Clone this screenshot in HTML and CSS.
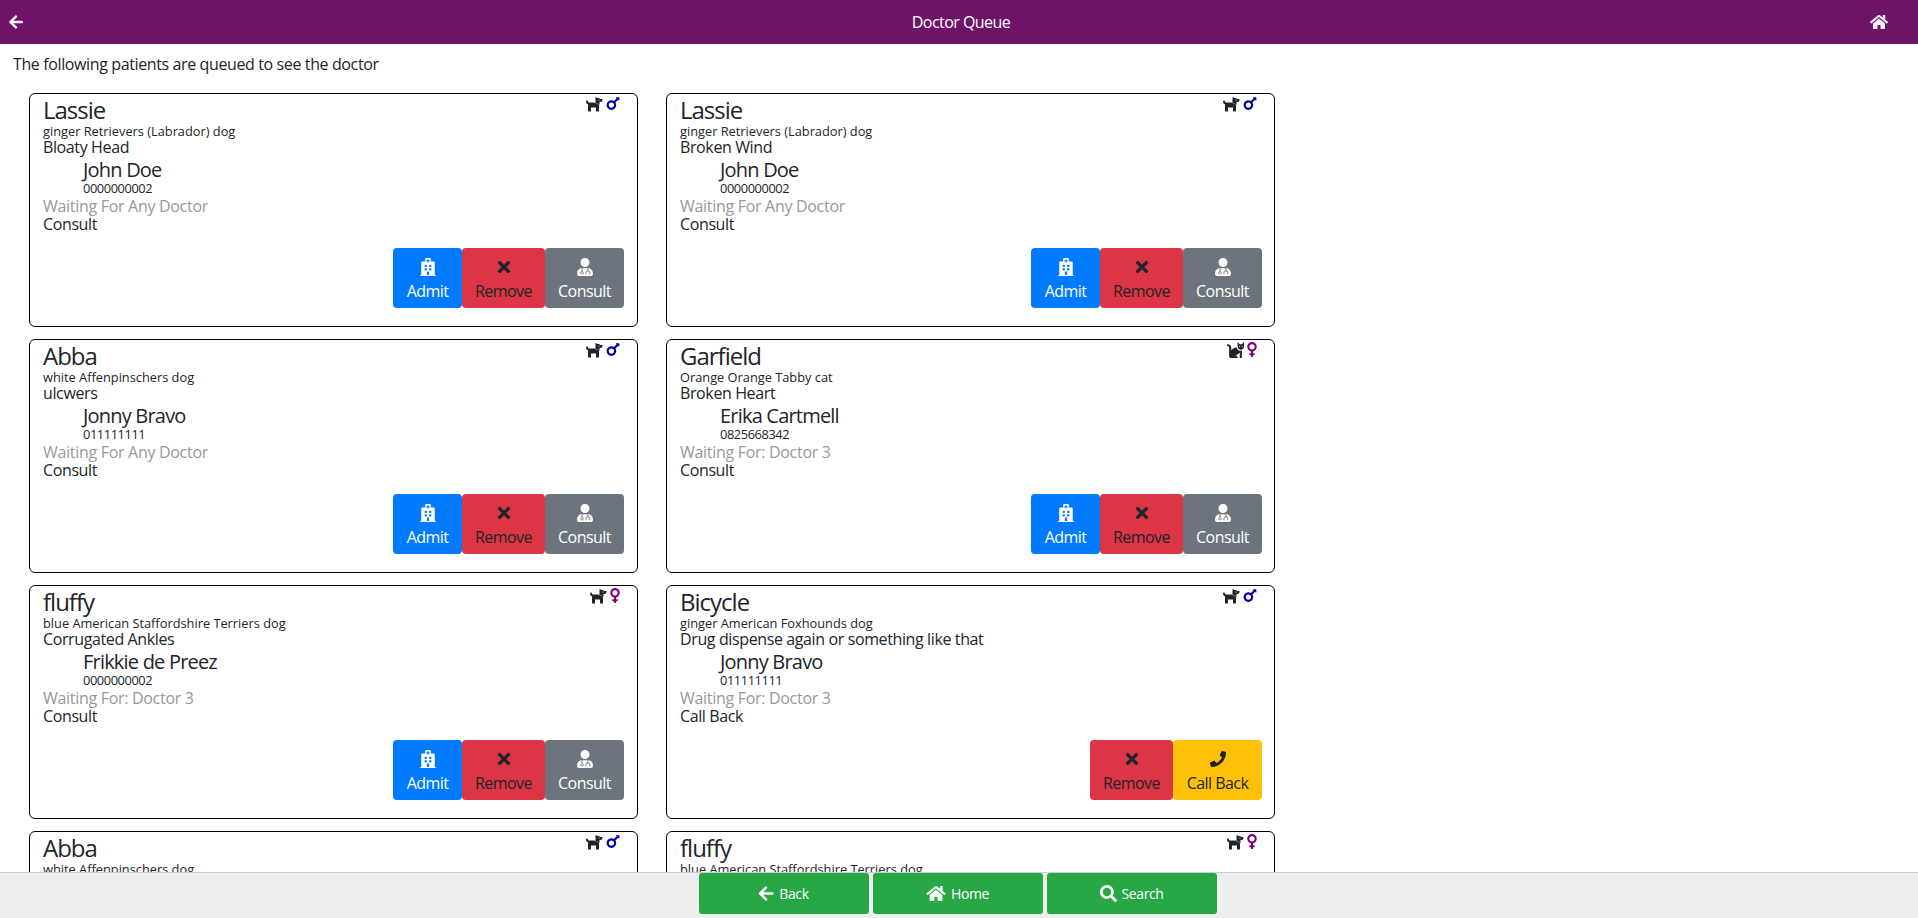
FILE: index.html
```html
<!DOCTYPE html>
<html lang="en">
<head>
<meta charset="utf-8">
<title>Doctor Queue</title>
<link rel="stylesheet" href="styles.css">
</head>
<body>
<svg class="sprite" xmlns="http://www.w3.org/2000/svg">
<symbol id="i-back" viewBox="0 0 448 512"><path d="M257.5 445.1l-22.2 22.2c-9.4 9.4-24.6 9.4-33.9 0L7 273c-9.4-9.4-9.4-24.6 0-33.9L201.4 44.7c9.4-9.4 24.6-9.4 33.9 0l22.2 22.2c9.5 9.5 9.3 25-.4 34.3L136.6 216H424c13.3 0 24 10.7 24 24v32c0 13.3-10.7 24-24 24H136.6l120.5 114.8c9.8 9.3 10 24.8.4 34.3z"/></symbol>
<symbol id="i-home" viewBox="0 0 576 512"><path d="M280.37 148.26L96 300.11V464a16 16 0 0 0 16 16l112.06-.29a16 16 0 0 0 15.92-16V368a16 16 0 0 1 16-16h64a16 16 0 0 1 16 16v95.64a16 16 0 0 0 16 16.05L464 480a16 16 0 0 0 16-16V300L295.67 148.26a12.19 12.19 0 0 0-15.3 0zM571.6 251.47L488 182.56V44.05a12 12 0 0 0-12-12h-56a12 12 0 0 0-12 12v72.61L318.47 43a48 48 0 0 0-61 0L4.34 251.47a12 12 0 0 0-1.6 16.9l25.5 31A12 12 0 0 0 45.15 301l235.22-193.74a12.19 12.19 0 0 1 15.3 0L530.9 301a12 12 0 0 0 16.9-1.6l25.5-31a12 12 0 0 0-1.7-16.93z"/></symbol>
<symbol id="i-search" viewBox="0 0 512 512"><path d="M505 442.7L405.3 343c-4.5-4.5-10.6-7-17-7H372c27.6-35.3 44-79.7 44-128C416 93.1 322.9 0 208 0S0 93.1 0 208s93.1 208 208 208c48.3 0 92.7-16.4 128-44v16.3c0 6.4 2.5 12.5 7 17l99.7 99.7c9.4 9.4 24.6 9.4 33.9 0l28.3-28.3c9.4-9.4 9.4-24.6.1-34zM208 336c-70.7 0-128-57.2-128-128 0-70.7 57.2-128 128-128 70.7 0 128 57.2 128 128 0 70.7-57.2 128-128 128z"/></symbol>
<symbol id="i-times" viewBox="0 0 352 512"><path d="M242.72 256l100.07-100.07c12.28-12.28 12.28-32.19 0-44.48l-22.24-22.24c-12.28-12.28-32.19-12.28-44.48 0L176 189.28 75.93 89.21c-12.28-12.28-32.19-12.28-44.48 0L9.21 111.45c-12.28 12.28-12.28 32.19 0 44.48L109.28 256 9.21 356.07c-12.28 12.28-12.28 32.19 0 44.48l22.24 22.24c12.28 12.28 32.2 12.28 44.48 0L176 322.72l100.07 100.07c12.28 12.28 32.2 12.28 44.48 0l22.24-22.24c12.28-12.28 12.28-32.19 0-44.48L242.72 256z"/></symbol>
<symbol id="i-phone" viewBox="0 0 512 512"><path d="M493.4 24.6l-104-24c-11.3-2.6-22.9 3.3-27.5 13.9l-48 112c-4.2 9.8-1.4 21.3 6.9 28l60.6 49.6c-36 76.7-98.9 140.5-177.2 177.2l-49.6-60.6c-6.8-8.3-18.2-11.1-28-6.9l-112 48C3.9 366.5-2 378.1.6 389.4l24 104C27.1 504.2 36.7 512 48 512c256.1 0 464-207.5 464-464 0-11.2-7.7-20.9-18.6-23.4z"/></symbol>
<symbol id="i-mars" viewBox="0 0 384 512"><path d="M372 64h-79c-10.7 0-16 12.9-8.5 20.5l16.9 16.9-80.7 80.7c-22.2-14-48.5-22.1-76.7-22.1C64.5 160 0 224.5 0 304s64.5 144 144 144 144-64.5 144-144c0-28.2-8.1-54.5-22.1-76.7l80.7-80.7 16.9 16.9c7.6 7.6 20.5 2.2 20.5-8.5V84c0-11-9-20-20-20zM144 384c-44.1 0-80-35.9-80-80s35.9-80 80-80 80 35.9 80 80-35.9 80-80 80z"/></symbol>
<symbol id="i-venus" viewBox="0 0 288 512"><path d="M288 176c0-79.5-64.5-144-144-144S0 96.5 0 176c0 68.5 47.9 125.9 112 140.4V368H76c-6.6 0-12 5.4-12 12v40c0 6.6 5.4 12 12 12h36v36c0 6.6 5.4 12 12 12h40c6.6 0 12-5.4 12-12v-36h36c6.6 0 12-5.4 12-12v-40c0-6.6-5.4-12-12-12h-36v-51.6c64.1-14.5 112-71.9 112-140.4zm-224 0c0-44.1 35.9-80 80-80s80 35.9 80 80-35.9 80-80 80-80-35.9-80-80z"/></symbol>
<symbol id="i-dog" viewBox="0 0 576 512"><path d="M298.06,224,448,277.55V496a16,16,0,0,1-16,16H368a16,16,0,0,1-16-16V384H192V496a16,16,0,0,1-16,16H112a16,16,0,0,1-16-16V282.09C58.84,268.84,32,233.66,32,192a32,32,0,0,1,64,0,32.06,32.06,0,0,0,32,32ZM544,112H480l-7.16-14.31A32,32,0,0,0,444.22,80H390.13L363.31,53.2C353.23,43.12,336,50.26,336,64.51V249.14l128,45.71V208h32a64,64,0,0,0,64-64V128A16,16,0,0,0,544,112ZM448,160a16,16,0,1,1,16-16A16,16,0,0,1,448,160Z"/></symbol>
<symbol id="i-cat" viewBox="0 0 512 512"><path d="M290.59 192c-20.18 0-106.82 1.98-162.59 85.95V192c0-52.94-43.06-96-96-96-17.67 0-32 14.33-32 32s14.33 32 32 32c17.64 0 32 14.36 32 32v256c0 35.3 28.7 64 64 64h176c8.84 0 16-7.16 16-16v-16c0-17.67-14.33-32-32-32h-32l128-96v144c0 8.84 7.16 16 16 16h32c8.84 0 16-7.16 16-16V289.86c-10.29 2.67-20.89 4.54-32 4.54-61.81 0-113.52-44.05-125.41-102.4zM448 96h-64l-64-64v134.4c0 53.02 42.98 96 96 96s96-42.98 96-96V32l-64 64zm-72 80c-8.84 0-16-7.16-16-16s7.16-16 16-16 16 7.16 16 16-7.16 16-16 16zm80 0c-8.84 0-16-7.16-16-16s7.16-16 16-16 16 7.16 16 16-7.16 16-16 16z"/></symbol>
<symbol id="i-hospital" viewBox="0 0 448 512"><path d="M448 492v20H0v-20c0-6.627 5.373-12 12-12h20V120c0-13.255 10.745-24 24-24h88V24c0-13.255 10.745-24 24-24h112c13.255 0 24 10.745 24 24v72h88c13.255 0 24 10.745 24 24v360h20c6.627 0 12 5.373 12 12zM308 192h-40c-6.627 0-12 5.373-12 12v40c0 6.627 5.373 12 12 12h40c6.627 0 12-5.373 12-12v-40c0-6.627-5.373-12-12-12zm-168 64h40c6.627 0 12-5.373 12-12v-40c0-6.627-5.373-12-12-12h-40c-6.627 0-12 5.373-12 12v40c0 6.627 5.373 12 12 12zm104 128h-40c-6.627 0-12 5.373-12 12v84h64v-84c0-6.627-5.373-12-12-12zm64-96h-40c-6.627 0-12 5.373-12 12v40c0 6.627 5.373 12 12 12h40c6.627 0 12-5.373 12-12v-40c0-6.627-5.373-12-12-12zm-116 12c0-6.627-5.373-12-12-12h-40c-6.627 0-12 5.373-12 12v40c0 6.627 5.373 12 12 12h40c6.627 0 12-5.373 12-12v-40zM182 96h26v26a6 6 0 0 0 6 6h20a6 6 0 0 0 6-6V96h26a6 6 0 0 0 6-6V70a6 6 0 0 0-6-6h-26V38a6 6 0 0 0-6-6h-20a6 6 0 0 0-6 6v26h-26a6 6 0 0 0-6 6v20a6 6 0 0 0 6 6z"/></symbol>
<symbol id="i-doctor" viewBox="0 0 448 512"><path d="M224 256c70.7 0 128-57.3 128-128S294.7 0 224 0 96 57.3 96 128s57.3 128 128 128zM134 288C60 288 0 348 0 422v42c0 26.5 21.5 48 48 48h352c26.5 0 48-21.5 48-48v-42c0-74-60-134-134-134z"/><path fill="none" stroke="#6c757d" stroke-width="28" d="M140 290v95M140 385a35 35 0 1 0 .1 0zM305 290v70M250 465v-45a55 55 0 0 1 110 0v45"/></symbol>
</svg>

<header class="topbar">
  <svg class="top-icon top-back"><use href="#i-back"/></svg>
  <span class="top-title">Doctor Queue</span>
  <svg class="top-icon top-home"><use href="#i-home"/></svg>
</header>

<main class="page">
  <p class="intro">The following patients are queued to see the doctor</p>
  <div class="queue">

    <article class="card">
      <div class="tags"><svg class="tag tag-dog"><use href="#i-dog"/></svg><svg class="tag tag-mars"><use href="#i-mars"/></svg></div>
      <div class="name">Lassie</div>
      <div class="small">ginger Retrievers (Labrador) dog</div>
      <div class="line">Bloaty Head</div>
      <div class="owner">John Doe</div>
      <div class="phone">0000000002</div>
      <div class="line muted">Waiting For Any Doctor</div>
      <div class="line">Consult</div>
      <div class="actions">
        <button class="btn btn-admit"><svg class="bi"><use href="#i-hospital"/></svg><span>Admit</span></button>
        <button class="btn btn-remove"><svg class="bi"><use href="#i-times"/></svg><span>Remove</span></button>
        <button class="btn btn-consult"><svg class="bi"><use href="#i-doctor"/></svg><span>Consult</span></button>
      </div>
    </article>

    <article class="card">
      <div class="tags"><svg class="tag tag-dog"><use href="#i-dog"/></svg><svg class="tag tag-mars"><use href="#i-mars"/></svg></div>
      <div class="name">Lassie</div>
      <div class="small">ginger Retrievers (Labrador) dog</div>
      <div class="line">Broken Wind</div>
      <div class="owner">John Doe</div>
      <div class="phone">0000000002</div>
      <div class="line muted">Waiting For Any Doctor</div>
      <div class="line">Consult</div>
      <div class="actions">
        <button class="btn btn-admit"><svg class="bi"><use href="#i-hospital"/></svg><span>Admit</span></button>
        <button class="btn btn-remove"><svg class="bi"><use href="#i-times"/></svg><span>Remove</span></button>
        <button class="btn btn-consult"><svg class="bi"><use href="#i-doctor"/></svg><span>Consult</span></button>
      </div>
    </article>

    <article class="card">
      <div class="tags"><svg class="tag tag-dog"><use href="#i-dog"/></svg><svg class="tag tag-mars"><use href="#i-mars"/></svg></div>
      <div class="name">Abba</div>
      <div class="small">white Affenpinschers dog</div>
      <div class="line">ulcwers</div>
      <div class="owner">Jonny Bravo</div>
      <div class="phone">011111111</div>
      <div class="line muted">Waiting For Any Doctor</div>
      <div class="line">Consult</div>
      <div class="actions">
        <button class="btn btn-admit"><svg class="bi"><use href="#i-hospital"/></svg><span>Admit</span></button>
        <button class="btn btn-remove"><svg class="bi"><use href="#i-times"/></svg><span>Remove</span></button>
        <button class="btn btn-consult"><svg class="bi"><use href="#i-doctor"/></svg><span>Consult</span></button>
      </div>
    </article>

    <article class="card">
      <div class="tags"><svg class="tag tag-cat"><use href="#i-cat"/></svg><svg class="tag tag-venus"><use href="#i-venus"/></svg></div>
      <div class="name">Garfield</div>
      <div class="small">Orange Orange Tabby cat</div>
      <div class="line">Broken Heart</div>
      <div class="owner">Erika Cartmell</div>
      <div class="phone">0825668342</div>
      <div class="line muted">Waiting For: Doctor 3</div>
      <div class="line">Consult</div>
      <div class="actions">
        <button class="btn btn-admit"><svg class="bi"><use href="#i-hospital"/></svg><span>Admit</span></button>
        <button class="btn btn-remove"><svg class="bi"><use href="#i-times"/></svg><span>Remove</span></button>
        <button class="btn btn-consult"><svg class="bi"><use href="#i-doctor"/></svg><span>Consult</span></button>
      </div>
    </article>

    <article class="card">
      <div class="tags"><svg class="tag tag-dog"><use href="#i-dog"/></svg><svg class="tag tag-venus"><use href="#i-venus"/></svg></div>
      <div class="name">fluffy</div>
      <div class="small">blue American Staffordshire Terriers dog</div>
      <div class="line">Corrugated Ankles</div>
      <div class="owner">Frikkie de Preez</div>
      <div class="phone">0000000002</div>
      <div class="line muted">Waiting For: Doctor 3</div>
      <div class="line">Consult</div>
      <div class="actions">
        <button class="btn btn-admit"><svg class="bi"><use href="#i-hospital"/></svg><span>Admit</span></button>
        <button class="btn btn-remove"><svg class="bi"><use href="#i-times"/></svg><span>Remove</span></button>
        <button class="btn btn-consult"><svg class="bi"><use href="#i-doctor"/></svg><span>Consult</span></button>
      </div>
    </article>

    <article class="card">
      <div class="tags"><svg class="tag tag-dog"><use href="#i-dog"/></svg><svg class="tag tag-mars"><use href="#i-mars"/></svg></div>
      <div class="name">Bicycle</div>
      <div class="small">ginger American Foxhounds dog</div>
      <div class="line">Drug dispense again or something like that</div>
      <div class="owner">Jonny Bravo</div>
      <div class="phone">011111111</div>
      <div class="line muted">Waiting For: Doctor 3</div>
      <div class="line">Call Back</div>
      <div class="actions">
        <button class="btn btn-remove"><svg class="bi"><use href="#i-times"/></svg><span>Remove</span></button>
        <button class="btn btn-call"><svg class="bi"><use href="#i-phone"/></svg><span>Call Back</span></button>
      </div>
    </article>

    <article class="card">
      <div class="tags"><svg class="tag tag-dog"><use href="#i-dog"/></svg><svg class="tag tag-mars"><use href="#i-mars"/></svg></div>
      <div class="name">Abba</div>
      <div class="small">white Affenpinschers dog</div>
    </article>

    <article class="card">
      <div class="tags"><svg class="tag tag-dog"><use href="#i-dog"/></svg><svg class="tag tag-venus"><use href="#i-venus"/></svg></div>
      <div class="name">fluffy</div>
      <div class="small">blue American Staffordshire Terriers dog</div>
    </article>

  </div>
</main>

<footer class="bottombar">
  <button class="nav-btn"><svg class="ni"><use href="#i-back"/></svg><span>Back</span></button>
  <button class="nav-btn"><svg class="ni ni-home"><use href="#i-home"/></svg><span>Home</span></button>
  <button class="nav-btn"><svg class="ni ni-search"><use href="#i-search"/></svg><span>Search</span></button>
</footer>
</body>
</html>
```

FILE: styles.css
```css
* { box-sizing: border-box; }
html, body { height: 100%; margin: 0; }
body {
  display: flex;
  flex-direction: column;
  height: 918px;
  overflow: hidden;
  background: #fff;
  color: #212529;
  font-family: "Open Sans", "Noto Sans", sans-serif;
  font-size: 16px;
  letter-spacing: -0.38px;
}
.sprite { display: none; }

.topbar {
  flex: 0 0 44px;
  display: flex;
  align-items: center;
  justify-content: space-between;
  padding: 0 30px 0 8px;
  background: #6d1468;
  color: #fff;
}
.top-icon { width: 16px; height: 16px; fill: #fbeffb; }
.top-home { width: 18px; }
.top-title { font-size: 16px; letter-spacing: -0.55px; margin-left: 28px; }

.page { flex: 1 1 auto; min-height: 0; overflow: hidden; }
.intro { margin: 0; padding: 9px 13px 0; height: 49px; line-height: 22px; }

.queue {
  display: grid;
  grid-template-columns: 609px 609px;
  grid-auto-rows: 234px;
  column-gap: 28px;
  row-gap: 12px;
  margin-left: 29px;
}
.card {
  position: relative;
  display: flex;
  flex-direction: column;
  padding: 0 13px;
  background: #fff;
  border: 1px solid #000;
  border-radius: 6px;
}
.card:nth-child(even) { padding-right: 12px; }
.tags {
  position: absolute;
  top: 1px;
  right: 17px;
  display: flex;
  gap: 3px;
  align-items: center;
}
.tag { height: 17px; display: block; }
.tag-dog { width: 18px; fill: #212529; }
.tag-cat { width: 17px; fill: #212529; }
.tag-mars { width: 14px; fill: #0000a8; }
.tag-venus { width: 10px; fill: #800080; }

.name { font-size: 24px; line-height: 29px; margin-top: 1px; letter-spacing: -1px; }
.small { font-size: 12.8px; line-height: 14px; letter-spacing: 0; }
.line { line-height: 19px; }
.owner { font-size: 20px; line-height: 25px; margin-left: 40px; letter-spacing: -0.8px; }
.phone { font-size: 12.8px; line-height: 13px; margin-left: 40px; letter-spacing: -0.4px; }
.muted { color: #999; margin-top: 1.5px; margin-bottom: -1px; letter-spacing: -0.3px; }

.actions {
  margin-top: auto;
  margin-bottom: 18px;
  display: flex;
  justify-content: flex-end;
  letter-spacing: -0.55px;
}
.btn {
  display: flex;
  flex-direction: column;
  align-items: center;
  justify-content: flex-end;
  height: 60px;
  padding: 0 0 5px;
  border: 0;
  border-radius: 4px;
  font: inherit;
  letter-spacing: inherit;
  line-height: 24px;
}
.bi { width: 16px; height: 18px; margin-bottom: 3px; fill: currentColor; }
.btn-admit { width: 69px; background: #007bff; color: #fff; }
.btn-remove { width: 83px; background: #dc3545; color: #212529; }
.btn-consult { width: 79px; background: #6c757d; color: #fff; }
.btn-call { width: 89px; background: #ffc107; color: #212529; }

.bottombar {
  flex: 0 0 46px;
  display: flex;
  gap: 4px;
  padding: 0 0 4px 698.5px;
  background: #eee;
  border-top: 1px solid #ccc;
}
.nav-btn {
  width: 170px;
  height: 41px;
  display: flex;
  align-items: center;
  justify-content: center;
  gap: 5px;
  border: 0;
  border-radius: 3px;
  background: #28a745;
  color: #fff;
  font: inherit;
  font-size: 14px;
  letter-spacing: -0.4px;
}
.ni { width: 16px; height: 17px; fill: #fff; }
.ni-home { width: 20px; }
.ni-search { width: 17px; }
```
